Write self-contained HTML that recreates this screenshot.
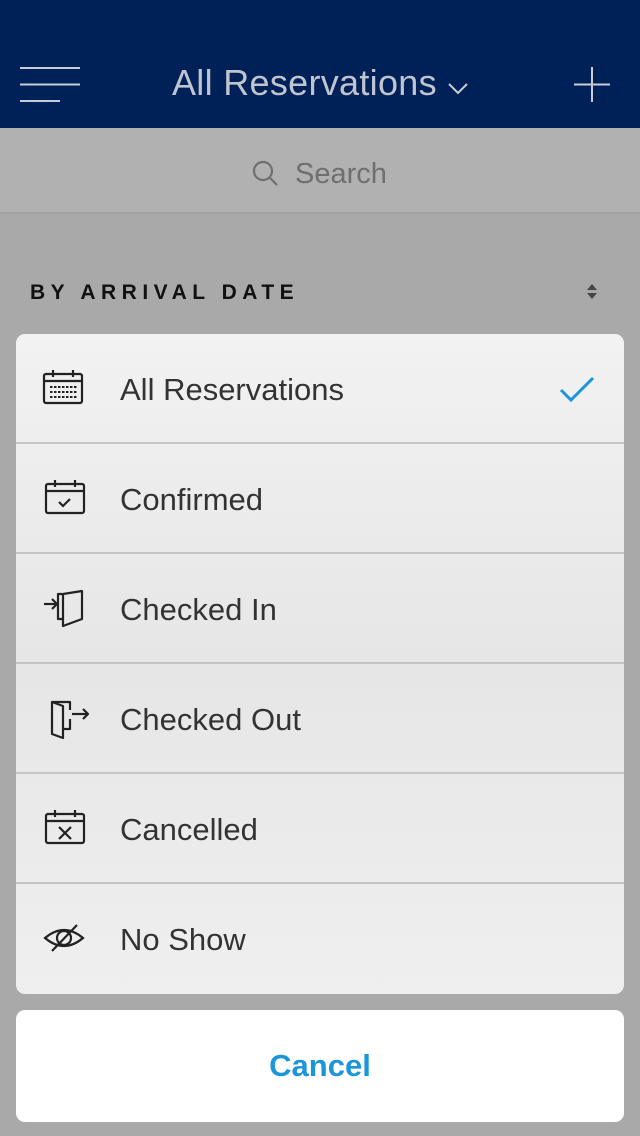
<!DOCTYPE html>
<html><head><style>
*{margin:0;padding:0;box-sizing:border-box}
body{width:640px;height:1136px;overflow:hidden;background:#a9a9a9;font-family:"Liberation Sans",sans-serif;position:relative}
.hdr{position:absolute;top:0;left:0;width:640px;height:128px;background:#002157}
.title{position:absolute;top:62px;left:172px;color:#bfc4cf;font-size:36px;font-weight:300;letter-spacing:0.3px}
.srch{position:absolute;top:128px;left:0;width:640px;height:86px;background:#b1b1b1;border-bottom:2px solid #a0a0a0}
.srch span{position:absolute;left:295px;top:30px;font-size:29px;color:#6f6f6f}
.by{position:absolute;top:281px;left:30px;font-size:21px;font-weight:bold;letter-spacing:5.5px;color:#111}
.sheet{position:absolute;left:16px;top:334px;width:608px;height:660px;background:linear-gradient(#f2f2f2,#e6e6e6 50%,#efefef);border-radius:9px;overflow:hidden}
.row{height:110px;border-bottom:2px solid #c4c4c4;position:relative}
.row:last-child{border-bottom:none}
.row span{position:absolute;left:104px;top:38px;font-size:31px;color:#333;font-weight:300}
.row svg{position:absolute;left:26px;top:36px}
.cancel{position:absolute;left:16px;top:1010px;width:608px;height:112px;background:#fff;border-radius:9px;text-align:center;line-height:112px;font-size:31px;font-weight:bold;color:#1b96dc}
</style></head><body>
<div class="hdr">
<svg width="640" height="128" style="position:absolute;left:0;top:0" stroke="#c8ccd6" stroke-width="2" fill="none">
<line x1="20" y1="68" x2="80" y2="68"/><line x1="20" y1="84.5" x2="80" y2="84.5"/><line x1="20" y1="101" x2="60" y2="101"/>
<polyline points="449,84 458,93 467,84"/>
<line x1="592" y1="67" x2="592" y2="102"/><line x1="574" y1="84.5" x2="610" y2="84.5"/>
</svg>
<div class="title">All Reservations</div>
</div>
<div class="srch"><svg width="30" height="30" style="position:absolute;left:250px;top:30px" stroke="#6f6f6f" stroke-width="2.2" fill="none"><circle cx="13" cy="13" r="9"/><line x1="20" y1="20" x2="27" y2="27"/></svg><span>Search</span></div>
<div class="by">BY ARRIVAL DATE</div>
<svg width="14" height="20" style="position:absolute;left:585px;top:282px" fill="#444"><polygon points="7,2 12,8 2,8"/><polygon points="7,17 12,11 2,11"/></svg>
<div class="sheet">
<div class="row"><svg width="44" height="40" fill="none" stroke="#222" stroke-width="2.2"><rect x="2" y="4" width="38" height="29" rx="2"/><line x1="2" y1="11" x2="40" y2="11"/><line x1="11" y1="0" x2="11" y2="7"/><line x1="31" y1="0" x2="31" y2="7"/><g stroke-dasharray="2.5 1.5" stroke-width="2"><line x1="8" y1="17" x2="35" y2="17"/><line x1="8" y1="22" x2="35" y2="22"/><line x1="8" y1="27" x2="35" y2="27"/></g></svg><span>All Reservations</span>
<svg width="40" height="30" style="left:542px;top:42px" fill="none" stroke="#1b96dc" stroke-width="3"><polyline points="3,14 13,24 35,2"/></svg></div>
<div class="row"><svg width="44" height="40" fill="none" stroke="#222" stroke-width="2.2"><rect x="4" y="4" width="38" height="29" rx="2"/><line x1="4" y1="11" x2="42" y2="11"/><line x1="13" y1="0" x2="13" y2="7"/><line x1="33" y1="0" x2="33" y2="7"/><polyline points="17,22 21,26 28,19"/></svg><span>Confirmed</span></div>
<div class="row"><svg width="50" height="44" style="left:26px;top:34px" fill="none" stroke="#222" stroke-width="2.2" stroke-linejoin="round"><line x1="2" y1="16" x2="15" y2="16"/><polyline points="10,11 15,16 10,21"/><polyline points="20,6 16,6 16,31 21,31"/><polygon points="21,6 40,3 40,31 21,38"/></svg><span>Checked In</span></div>
<div class="row"><svg width="50" height="44" style="left:26px;top:34px" fill="none" stroke="#222" stroke-width="2.2" stroke-linejoin="round"><polyline points="28,12 28,4 10,4"/><polyline points="28,21 28,31 22,31"/><polygon points="10,4 21,8 21,40 10,36"/><line x1="30" y1="16" x2="46" y2="16"/><polyline points="41,11 46,16 41,21"/></svg><span>Checked Out</span></div>
<div class="row"><svg width="44" height="40" fill="none" stroke="#222" stroke-width="2.2"><rect x="4" y="4" width="38" height="29" rx="2"/><line x1="4" y1="11" x2="42" y2="11"/><line x1="13" y1="0" x2="13" y2="7"/><line x1="33" y1="0" x2="33" y2="7"/><line x1="17" y1="17" x2="29" y2="29"/><line x1="29" y1="17" x2="17" y2="29"/></svg><span>Cancelled</span></div>
<div class="row"><svg width="44" height="40" fill="none" stroke="#222" stroke-width="2.2"><path d="M3,18 Q22,2 41,18 Q22,34 3,18Z"/><circle cx="22" cy="18" r="7"/><line x1="10" y1="31" x2="35" y2="5"/></svg><span>No Show</span></div>
</div>
<div class="cancel">Cancel</div>
</body></html>
